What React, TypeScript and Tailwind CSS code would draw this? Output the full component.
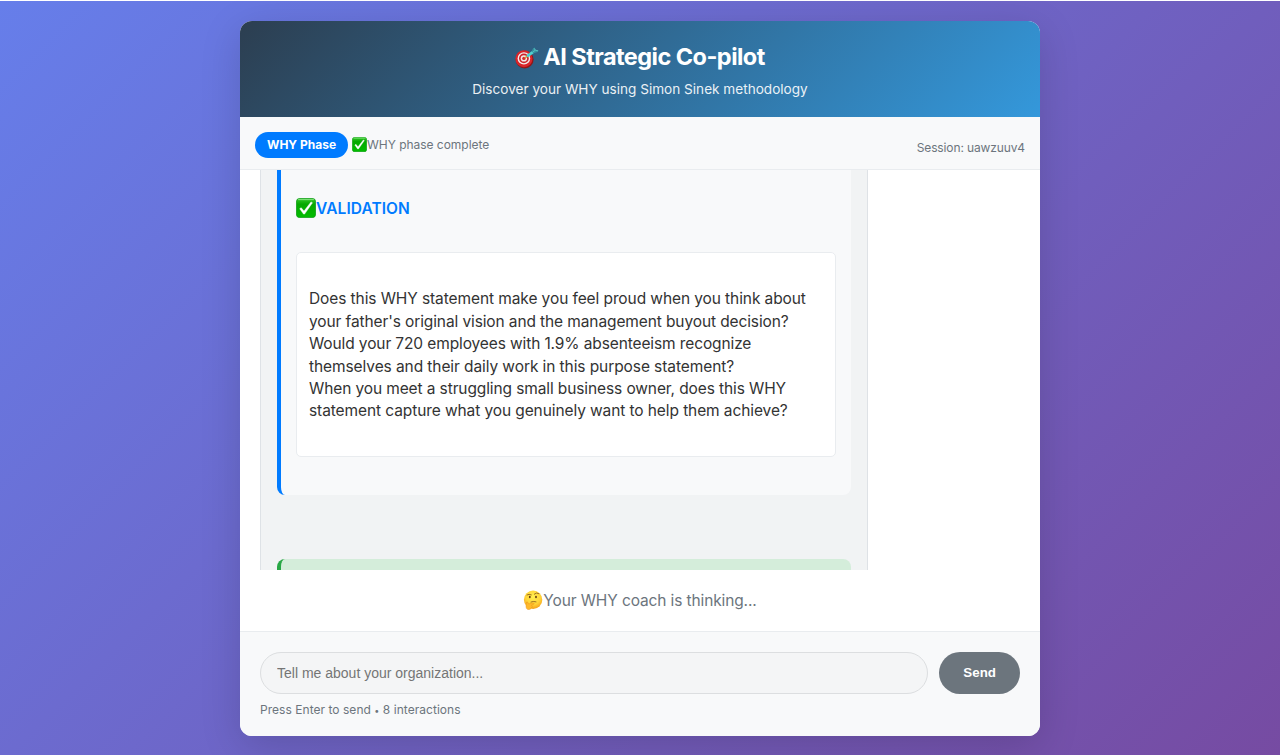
import React from "react";

function CheckEmoji({ className }: { className: string }) {
  return (
    <svg viewBox="0 0 20 20" className={className} aria-hidden="true">
      <defs>
        <linearGradient id="checkFill" x1="0" y1="0" x2="0" y2="1">
          <stop offset="0" stopColor="#43d13c" />
          <stop offset="0.14" stopColor="#1fb916" />
          <stop offset="0.3" stopColor="#06a800" />
          <stop offset="1" stopColor="#02bd00" />
        </linearGradient>
      </defs>
      <rect x="0.4" y="0.4" width="19.2" height="19.2" rx="3.4" fill="url(#checkFill)" stroke="#0c9a12" strokeWidth="0.8" />
      <path d="M2.5 1.6 H17.5" stroke="#8be582" strokeWidth="0.9" strokeLinecap="round" />
      <path d="M3.7 10.7 L5.2 9.7 L8 13 L15 3.9 L16.5 4.8 L8.6 16.1 H7.5 Z" fill="#fff" stroke="#fff" strokeWidth="0.4" strokeLinejoin="round" />
    </svg>
  );
}

function DartEmoji({ className }: { className: string }) {
  return (
    <svg viewBox="0 0 24 22" className={className} aria-hidden="true">
      <ellipse cx="9.6" cy="12.5" rx="9" ry="8.9" fill="#8f1717" />
      <ellipse cx="8.9" cy="11.8" rx="8.6" ry="8.5" fill="#d9252a" />
      <ellipse cx="8.9" cy="11.4" rx="6.3" ry="6.2" fill="#f3eeee" />
      <ellipse cx="8.9" cy="11.4" rx="4.9" ry="4.8" fill="#cf2429" />
      <ellipse cx="8.9" cy="11.4" rx="3.2" ry="3.1" fill="#f4e9e7" />
      <ellipse cx="8.9" cy="11.4" rx="1.7" ry="1.6" fill="#d3282d" />
      <path d="M9.8 11.2 L13.4 8.4" stroke="#d49b3a" strokeWidth="1.6" />
      <path d="M13 8.6 L17.8 5.2" stroke="#4dd0cf" strokeWidth="2.8" strokeLinecap="round" />
      <path d="M16.6 4.6 L18 1.6 L20 0.6 L20.2 2.8 L23.6 3.4 L22.6 5 L18.6 6.2 Z" fill="#34929f" />
      <path d="M17.6 5 L20.4 3.2 L19.2 1.4 M20.4 3.2 L23 3.8" fill="none" stroke="#62d6d3" strokeWidth="0.7" />
    </svg>
  );
}

function ThinkingEmoji({ className }: { className: string }) {
  return (
    <svg viewBox="0 0 20 20" className={className} aria-hidden="true">
      <defs>
        <radialGradient id="faceFill" cx="0.5" cy="0.35" r="0.65">
          <stop offset="0" stopColor="#fff04f" />
          <stop offset="0.6" stopColor="#ffd53a" />
          <stop offset="1" stopColor="#f5a21c" />
        </radialGradient>
      </defs>
      <circle cx="10.1" cy="9.7" r="9.2" fill="url(#faceFill)" />
      <ellipse cx="6.8" cy="7" rx="0.9" ry="1.2" fill="#663c12" />
      <ellipse cx="13" cy="7" rx="0.9" ry="1.2" fill="#663c12" />
      <path d="M4 4.9 Q6 3.7 8.3 4.8 M11.3 4.1 Q13.4 2 15.9 3.6" fill="none" stroke="#80501b" strokeWidth="0.8" strokeLinecap="round" />
      <path d="M8 12 Q10.3 10.9 13 11.8" fill="none" stroke="#80501b" strokeWidth="0.8" strokeLinecap="round" />
      <path d="M3.6 12 Q4.7 11.4 5 13 L5.4 14 L10.3 12.9 Q11.6 13 11 14.1 L8.5 15 Q10 16.2 8.6 18 Q7 20 4.8 19.5 Q2.8 19 3 16 Z" fill="#ffb92b" stroke="#e8941c" strokeWidth="0.5" />
    </svg>
  );
}

const lines = [
  { text: "Does this WHY statement make you feel proud when you think about", tracking: "tracking-[-0.092px]" },
  { text: "your father's original vision and the management buyout decision?", tracking: "tracking-[-0.11px]" },
  { text: "Would your 720 employees with 1.9% absenteeism recognize", tracking: "tracking-[-0.115px]" },
  { text: "themselves and their daily work in this purpose statement?", tracking: "tracking-[-0.085px]" },
  { text: "When you meet a struggling small business owner, does this WHY", tracking: "tracking-[-0.11px]" },
  { text: "statement capture what you genuinely want to help them achieve?", tracking: "tracking-[-0.095px]" },
];

export default function App() {
  return (
    <div className="h-[755px] w-full overflow-hidden bg-white pt-px font-['Inter',sans-serif]">
      <div className="flex h-[754px] justify-center bg-[linear-gradient(135deg,#667eea_0%,#764ba2_100%)] pt-5">
        <div className="flex h-[715px] w-[800px] flex-col overflow-hidden rounded-xl bg-white shadow-[0_10px_40px_rgba(0,0,0,0.15)]">
          <header className="flex h-24 shrink-0 flex-col items-center bg-[linear-gradient(135deg,#2c3e50_0%,#3498db_100%)] pt-5 text-white">
            <h1 className="flex h-8 items-center text-[23.5px] font-bold tracking-[-0.55px] whitespace-nowrap">
              <DartEmoji className="mt-[2px] mr-1 h-[22px] w-6" />
              <span>AI Strategic Co-pilot</span>
            </h1>
            <p className="mt-[6px] text-[13.6px] leading-5 whitespace-nowrap opacity-90">Discover your WHY using Simon Sinek methodology</p>
          </header>

          <div className="flex h-[53px] shrink-0 items-center justify-between border-b border-[#e9ecef] bg-[#f8f9fa] px-[15px] text-xs text-[#6c757d]">
            <div className="flex items-center pt-[3px]">
              <span className="flex h-[26px] w-[93px] items-center justify-center rounded-full bg-[#007bff] font-bold text-white">WHY Phase</span>
              <CheckEmoji className="ml-1 size-[15px]" />
              <span className="tracking-[-0.03px]">WHY phase complete</span>
            </div>
            <span className="pt-[9px] tracking-[-0.12px]">Session: uawzuuv4</span>
          </div>

          <main className="h-[400px] shrink-0 overflow-hidden pl-5">
            <div className="h-[400px] w-[608px] border-x border-[#dee2e6] bg-[#f1f3f4] px-4">
              <section className="h-[325px] rounded-b-lg border-l-4 border-[#007bff] bg-[#f8f9fa] px-[15px] pt-[27px]">
                <h2 className="flex h-[23px] items-center text-[15.5px] font-semibold tracking-[0.08px] text-[#007bff]">
                  <CheckEmoji className="mb-[2px] size-5" />
                  <span>VALIDATION</span>
                </h2>
                <div className="mt-8 h-[205px] rounded-[5px] border border-[#e9ecef] bg-white px-3 pt-[35.38px] text-[15.5px] leading-[22.4px] text-[#333]">
                  {lines.map((l) => (
                    <p key={l.text} className={`whitespace-nowrap ${l.tracking}`}>
                      {l.text}
                    </p>
                  ))}
                </div>
              </section>
              <section className="mt-16 h-20 rounded-lg border-l-4 border-[#28a745] bg-[#d4edda]" />
            </div>
          </main>

          <div className="flex h-[61px] shrink-0 items-center justify-center text-[15.5px] tracking-[-0.12px] text-[#6c757d]">
            <ThinkingEmoji className="mb-px size-5" />
            <span>Your WHY coach is thinking...</span>
          </div>

          <footer className="h-[105px] border-t border-[#e9ecef] bg-[#f8f9fa] px-5 pt-5">
            <div className="flex justify-between">
              <input
                className="h-[42px] w-[667.5px] rounded-full border border-[#dcdee0] bg-[#f4f5f6] px-4 font-['Liberation_Sans',sans-serif] text-sm placeholder:text-[#757575]"
                placeholder="Tell me about your organization..."
              />
              <button className="h-[42px] w-[80.7px] rounded-full bg-[#6c757d] font-['Liberation_Sans',sans-serif] text-[13.33px] font-bold text-white">Send</button>
            </div>
            <p className="mt-2 text-xs tracking-[0.04px] whitespace-nowrap text-[#6c757d]">
              Press Enter to send <span className="text-[9px]">•</span> 8 interactions
            </p>
          </footer>
        </div>
      </div>
    </div>
  );
}
